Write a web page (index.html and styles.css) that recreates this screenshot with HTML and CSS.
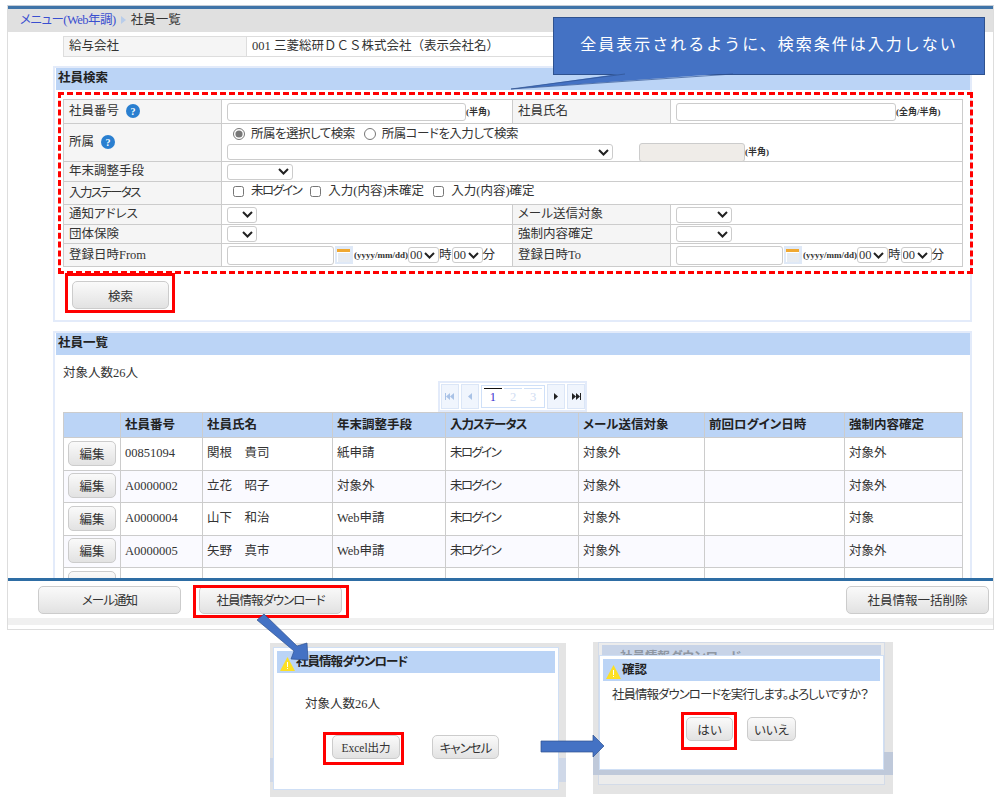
FILE: index.html
```html
<!DOCTYPE html>
<html lang="ja">

<head>
    <meta charset="UTF-8">
    <title>社員一覧</title>
    <link rel="stylesheet" href="styles.css">
</head>

<body>

    <div class="window">
        <!-- Breadcrumb -->
        <div class="crumb">
            <a href="#" class="ks-s">メニュー(Web年調)</a>
            <svg class="crumb-sep" width="5" height="8" viewBox="0 0 5 8"><path d="M0 0L5 4L0 8Z" fill="#b9cdea"/></svg>
            <span>社員一覧</span>
        </div>

        <div class="main">
            <table class="company">
                <tr>
                    <th>給与会社</th>
                    <td>001 三菱総研ＤＣＳ株式会社（表示会社名）</td>
                </tr>
            </table>

            <!-- Search panel -->
            <section class="panel search-panel">
                <h2>社員検索</h2>
                <table class="form-table">
                    <colgroup>
                        <col class="c-label"><col class="c-value"><col class="c-label"><col>
                    </colgroup>
                    <tr class="r-24">
                        <th>社員番号<svg class="help" width="14" height="14" viewBox="0 0 14 14"><circle cx="7" cy="7" r="7" fill="#2a7fd0"/><text x="7" y="11" text-anchor="middle" font-size="10" font-weight="bold" fill="#fff">?</text></svg></th>
                        <td><input type="text" class="txt-long"><span class="hint">(半角)</span></td>
                        <th>社員氏名</th>
                        <td><input type="text" class="txt-name"><span class="hint">(全角/半角)</span></td>
                    </tr>
                    <tr class="r-38">
                        <th>所属<svg class="help" width="14" height="14" viewBox="0 0 14 14"><circle cx="7" cy="7" r="7" fill="#2a7fd0"/><text x="7" y="11" text-anchor="middle" font-size="10" font-weight="bold" fill="#fff">?</text></svg></th>
                        <td colspan="3">
                            <div class="radio-row">
                                <label class="ks-s"><input type="radio" name="dept" checked>所属を選択して検索</label>
                                <label class="ks-s"><input type="radio" name="dept">所属コードを入力して検索</label>
                            </div>
                            <div class="dept-row">
                                <select class="sel-dept"><option></option></select>
                                <input type="text" class="txt-code" disabled><span class="hint">(半角)</span>
                            </div>
                        </td>
                    </tr>
                    <tr class="r-20">
                        <th>年末調整手段</th>
                        <td colspan="3"><select class="sel-mid"><option></option></select></td>
                    </tr>
                    <tr class="r-23">
                        <th class="ks-l">入力ステータス</th>
                        <td colspan="3" class="check-row">
                            <label class="ks-l"><input type="checkbox">未ログイン</label>
                            <label><input type="checkbox">入力(内容)未確定</label>
                            <label><input type="checkbox">入力(内容)確定</label>
                        </td>
                    </tr>
                    <tr class="r-20">
                        <th>通知アドレス</th>
                        <td><select class="sel-small"><option></option></select></td>
                        <th>メール送信対象</th>
                        <td><select class="sel-wide"><option></option></select></td>
                    </tr>
                    <tr class="r-19">
                        <th>団体保険</th>
                        <td><select class="sel-small"><option></option></select></td>
                        <th>強制内容確定</th>
                        <td><select class="sel-wide"><option></option></select></td>
                    </tr>
                    <tr class="r-23">
                        <th>登録日時From</th>
                        <td>
                            <div class="date-row">
                                <input type="text" class="txt-date">
                                <svg class="cal" width="18" height="18" viewBox="0 0 18 18"><rect width="18" height="18" fill="#dfe9f7"/><rect x="2" y="3" width="13" height="3" fill="#f0a830"/><rect x="2" y="6" width="13" height="10" fill="#fff"/><path d="M4 7V16M6 7V16M8 7V16M10 7V16M12 7V16M14 7V16" stroke="#cfd8e4"/></svg>
                                <span class="hint">(yyyy/mm/dd)</span>
                                <select class="sel-time"><option>00</option></select>時<select class="sel-time"><option>00</option></select>分
                            </div>
                        </td>
                        <th>登録日時To</th>
                        <td>
                            <div class="date-row">
                                <input type="text" class="txt-date">
                                <svg class="cal" width="18" height="18" viewBox="0 0 18 18"><rect width="18" height="18" fill="#dfe9f7"/><rect x="2" y="3" width="13" height="3" fill="#f0a830"/><rect x="2" y="6" width="13" height="10" fill="#fff"/><path d="M4 7V16M6 7V16M8 7V16M10 7V16M12 7V16M14 7V16" stroke="#cfd8e4"/></svg>
                                <span class="hint">(yyyy/mm/dd)</span>
                                <select class="sel-time"><option>00</option></select>時<select class="sel-time"><option>00</option></select>分
                            </div>
                        </td>
                    </tr>
                </table>
                <button class="btn btn-search">検索</button>
            </section>

            <!-- Employee list -->
            <section class="panel list-panel">
                <h2>社員一覧</h2>
                <p class="count">対象人数26人</p>
                <div class="pager-wrap">
                    <div class="pager">
                        <span class="pg-btn"><svg width="9" height="7" viewBox="0 0 9 7"><path d="M0 0H1V7H0ZM5 0V7L1 3.5ZM9 0V7L5 3.5Z" fill="#a9c2e6"/></svg></span>
                        <span class="pg-btn"><svg width="4" height="7" viewBox="0 0 4 7"><path d="M4 0V7L0 3.5Z" fill="#a9c2e6"/></svg></span>
                        <div class="pg-nums">
                            <a class="current">1</a><a>2</a><a>3</a>
                        </div>
                        <span class="pg-btn"><svg width="4" height="7" viewBox="0 0 4 7"><path d="M0 0V7L4 3.5Z" fill="#222"/></svg></span>
                        <span class="pg-btn"><svg width="9" height="7" viewBox="0 0 9 7"><path d="M0 0V7L4 3.5ZM4 0V7L8 3.5ZM8 0H9V7H8Z" fill="#222"/></svg></span>
                    </div>
                </div>
                <table class="list-table">
                    <colgroup>
                        <col style="width:57px"><col style="width:82px"><col style="width:130px"><col style="width:113px"><col style="width:133px"><col style="width:126px"><col style="width:140px"><col>
                    </colgroup>
                    <thead>
                        <tr>
                            <th></th><th>社員番号</th><th>社員氏名</th><th>年末調整手段</th><th class="ks">入力ステータス</th><th>メール送信対象</th><th>前回ログイン日時</th><th>強制内容確定</th>
                        </tr>
                    </thead>
                    <tbody>
                        <tr>
                            <td><button class="btn btn-edit">編集</button></td>
                            <td>00851094</td><td>関根　貴司</td><td>紙申請</td><td class="ks-l">未ログイン</td><td>対象外</td><td></td><td>対象外</td>
                        </tr>
                        <tr>
                            <td><button class="btn btn-edit">編集</button></td>
                            <td>A0000002</td><td>立花　昭子</td><td>対象外</td><td class="ks-l">未ログイン</td><td>対象外</td><td></td><td>対象外</td>
                        </tr>
                        <tr>
                            <td><button class="btn btn-edit">編集</button></td>
                            <td>A0000004</td><td>山下　和治</td><td>Web申請</td><td class="ks-l">未ログイン</td><td>対象外</td><td></td><td>対象</td>
                        </tr>
                        <tr>
                            <td><button class="btn btn-edit">編集</button></td>
                            <td>A0000005</td><td>矢野　真市</td><td>Web申請</td><td class="ks-l">未ログイン</td><td>対象外</td><td></td><td>対象外</td>
                        </tr>
                        <tr>
                            <td><button class="btn btn-edit"></button></td>
                            <td></td><td></td><td></td><td></td><td></td><td></td><td></td>
                        </tr>
                    </tbody>
                </table>
            </section>
        </div>

        <!-- Footer buttons -->
        <footer class="actions">
            <button class="btn btn-foot ks">メール通知</button>
            <button class="btn btn-foot ks">社員情報ダウンロード</button>
            <button class="btn btn-foot btn-right">社員情報一括削除</button>
        </footer>
    </div>

    <!-- Download dialog -->
    <div class="backdrop backdrop-a">
        <div class="band band-a"></div>
        <div class="dialog dialog-a">
            <h3 class="ks"><svg class="warn" width="15" height="14" viewBox="0 0 15 14"><path d="M7.5 0L15 14H0Z" fill="#fde025"/><path d="M7 5H8V10H7ZM7 11H8V12H7Z" fill="#fff"/></svg>社員情報ダウンロード</h3>
            <p class="dialog-count">対象人数26人</p>
            <div class="dialog-btns gap-a">
                <button class="btn btn-excel">Excel出力</button>
                <button class="btn btn-cancel ks">キャンセル</button>
            </div>
        </div>
    </div>

    <!-- Confirm dialog -->
    <div class="backdrop backdrop-b">
        <div class="ghost"><div class="ghost-head">社員情報ダウンロード</div></div>
        <div class="band band-b"></div>
        <div class="dialog dialog-b">
            <h3><svg class="warn" width="15" height="14" viewBox="0 0 15 14"><path d="M7.5 0L15 14H0Z" fill="#fde025"/><path d="M7 5H8V10H7ZM7 11H8V12H7Z" fill="#fff"/></svg>確認</h3>
            <p class="dialog-msg ks">社員情報ダウンロードを実行します。よろしいですか？</p>
            <div class="dialog-btns gap-b">
                <button class="btn btn-yes">はい</button>
                <button class="btn btn-no">いいえ</button>
            </div>
        </div>
    </div>

    <!-- Annotations drawn over the screen -->
    <div class="note-dash"></div>
    <div class="note-box box-search"></div>
    <div class="note-box box-download"></div>
    <div class="note-box box-excel"></div>
    <div class="note-box box-yes"></div>
    <div class="callout">全員表示されるように、検索条件は入力しない</div>
    <svg class="shapes" width="1005" height="797" viewBox="0 0 1005 797">
        <path d="M625 73H733L511 89Z" fill="#4472c4"/>
        <path d="M625 74L511 89L733 74" fill="none" stroke="#2f528f" stroke-width="0.7"/>
        <path d="M264 614L297 646L307 643L308 660L291 659L294 651L257 620Z" fill="#4472c4" stroke="#2f528f" stroke-width="0.7"/>
        <path d="M541 741H593V735L604 746L593 757V752H541Z" fill="#4472c4" stroke="#2f528f" stroke-width="0.7"/>
    </svg>

</body>

</html>
```

FILE: styles.css
```css
/* Basic Reset */
* {
    margin: 0;
    padding: 0;
    box-sizing: border-box;
}

body {
    position: relative;
    width: 1005px;
    height: 797px;
    overflow: hidden;
    background-color: white;
    color: #333;
    font-family: "Liberation Serif", "Noto Sans CJK JP", serif;
    font-size: 12.5px;
    line-height: 14px;
    font-feature-settings: "palt";
}

/* Tighter text where the kana run narrow */
.ks-s { letter-spacing: -0.5px; }
.ks { letter-spacing: -1px; }
.ks-l { letter-spacing: -1.6px; }

/* Main window */
.window {
    margin: 5px 0 0 7px;
    width: 987px;
    height: 625px;
    border: 1px solid #ddd;
    border-top: 1px solid #c4ccd6;
    background-color: white;
}

.crumb {
    height: 26px;
    padding: 0 0 2px 12px;
    border-top: 3px solid #3f74a8;
    background-color: #e0e0e0;
    display: flex;
    align-items: center;
    gap: 5px;
}

.crumb a {
    color: #3a4fd0;
    text-decoration: none;
}

.main {
    height: 546px;
    overflow: hidden;
    padding-top: 4px;
}

.company {
    margin-left: 55px;
    width: 900px;
    height: 21px;
    border-collapse: collapse;
    table-layout: fixed;
}

.company th,
.company td {
    border: 1px solid #ddd;
    padding: 0 5px 2px;
    text-align: left;
    font-weight: normal;
    font-feature-settings: normal;
}

.company th {
    width: 183px;
    background-color: #f5f5f5;
}

/* Panels */
.panel {
    margin-left: 45px;
    width: 919px;
    border: 2px solid #e3ebfa;
    border-top-width: 2px;
}

.panel h2 {
    height: 22px;
    margin-left: 1px;
    padding-left: 2px;
    line-height: 21px;
    background-color: #bbd4f6;
    font-size: 12.5px;
    color: #222;
}

.search-panel {
    margin-top: 9px;
    height: 256px;
}

.list-panel {
    margin-top: 9px;
    height: 300px;
}

/* Search form */
.form-table {
    margin: 9px 0 0 8px;
    width: 900px;
    border-collapse: collapse;
    table-layout: fixed;
    background-color: white;
}

.c-label {
    width: 158px;
}

.c-value {
    width: 291px;
}

.form-table th,
.form-table td {
    border: 1px solid #ccc;
    padding: 0 5px;
    text-align: left;
    font-weight: normal;
    white-space: nowrap;
}

.form-table th {
    background-color: #f5f5f5;
    padding-bottom: 1px;
}

.r-24 { height: 24px; }
.r-38 { height: 38px; }
.r-20 { height: 20px; }
.r-23 { height: 23px; }
.r-19 { height: 19px; }

.help {
    margin-left: 7px;
    vertical-align: -3px;
}

input[type="text"],
select {
    border: 1px solid #ccc;
    border-radius: 3px;
    background-color: white;
    font-family: inherit;
    font-size: 12.5px;
    color: #333;
    vertical-align: middle;
}

select {
    appearance: none;
    padding-left: 1px;
    background-image: url("data:image/svg+xml,%3Csvg xmlns='http://www.w3.org/2000/svg' width='11' height='7'%3E%3Cpath d='M1 1L5.5 5.5L10 1' fill='none' stroke='%23222' stroke-width='2'/%3E%3C/svg%3E");
    background-repeat: no-repeat;
    background-position: right 3px center;
}

.txt-long { width: 239px; height: 18px; }
.txt-name { width: 220px; height: 18px; }
.txt-code { width: 106px; height: 19px; margin-left: 26px; background-color: #efece8 !important; }
.txt-date { width: 107px; height: 19px; }

.sel-dept { width: 386px; height: 16px; }
.sel-mid { width: 66px; height: 16px; display: block; }
.sel-small { width: 30px; height: 16px; display: block; }
.sel-wide { width: 56px; height: 16px; display: block; }
.sel-time { width: 31px; height: 16px; }

.hint {
    font-size: 9px;
    font-weight: bold;
    white-space: nowrap;
}

.radio-row {
    display: flex;
    gap: 9px;
    padding-left: 6px;
    height: 19px;
    align-items: center;
}

.radio-row label,
.check-row label {
    display: inline-flex;
    align-items: center;
}

input[type="radio"] {
    width: 12px;
    height: 12px;
    margin-right: 6px;
    accent-color: #777;
}

input[type="checkbox"] {
    width: 11px;
    height: 11px;
    margin-right: 7px;
}

.dept-row {
    display: flex;
    align-items: center;
    height: 18px;
}

.check-row {
    padding-bottom: 2px !important;
}

.check-row label {
    margin: 0 0 0 6px;
}

.date-row {
    display: flex;
    align-items: center;
    white-space: nowrap;
}

.cal {
    margin: 0 1px;
    flex: none;
}

/* Buttons */
.btn {
    border: 1px solid #ccc;
    border-radius: 5px;
    background: linear-gradient(#fafafa, #e2e2e2);
    color: #333;
    font-family: inherit;
    font-size: 12.5px;
    font-feature-settings: "palt";
}

.btn-search {
    display: block;
    width: 97px;
    height: 28px;
    margin: 14px 0 0 17px;
}

.btn-edit {
    display: block;
    width: 48px;
    height: 25px;
    margin: 0 auto;
}

.btn-foot {
    width: 143px;
    height: 28px;
}

.btn-right {
    margin-left: auto;
}

/* Employee list */
.count {
    margin: 11px 0 0 8px;
    line-height: 15px;
}

.pager-wrap {
    display: flex;
    justify-content: flex-end;
    padding-right: 383px;
    height: 31px;
}

.pager {
    width: 149px;
    height: 31px;
    border: 2px solid #e3ebfa;
    display: flex;
    align-items: center;
    gap: 2px;
    padding-left: 1px;
    background-color: white;
}

.pg-btn {
    width: 18px;
    height: 25px;
    background-color: #f0f5fd;
    border: 1px solid #dbe6f7;
    display: flex;
    align-items: center;
    justify-content: center;
}

.pg-nums {
    width: 65px;
    height: 23px;
    border: 1px solid #cfe0f8;
    display: flex;
    gap: 2px;
    padding: 2px 2px 0;
}

.pg-nums a {
    flex: 1;
    text-align: center;
    line-height: 16px;
    color: #cfdcf2;
    border-top: 1px solid #cfe0f8;
}

.pg-nums a.current {
    color: #3a2fd0;
    border-top: 1px solid #111;
}

.list-table {
    margin-left: 8px;
    width: 900px;
    border-collapse: collapse;
    table-layout: fixed;
}

.list-table th,
.list-table td {
    border: 1px solid #ccc;
    padding: 0 4px 1px;
    text-align: left;
}

.list-table th {
    height: 25px;
    background-color: #bbd4f6;
    color: #222;
}

.list-table td {
    height: 32.5px;
}

.list-table tbody tr:nth-child(even) {
    background-color: #fafaff;
}

/* Footer buttons */
.actions {
    height: 47px;
    border-top: 3px solid #2e6da4;
    border-bottom: 7px solid #f0f0f0;
    display: flex;
    align-items: center;
    gap: 18px;
    padding: 0 4px 0 30px;
}

/* Dialogs */
.backdrop {
    position: absolute;
    background-color: #e4e4e4;
}

.backdrop-a {
    left: 270px;
    top: 643px;
    width: 296px;
    height: 154px;
}

.backdrop-b {
    left: 593px;
    top: 642px;
    width: 300px;
    height: 152px;
}

.band {
    position: absolute;
    left: 0;
    width: 100%;
}

.band-a {
    top: 115px;
    height: 24px;
    background-color: #cfd8e8;
}

.band-b {
    top: 110px;
    height: 23px;
    background-color: #bfc9da;
}

.dialog {
    position: absolute;
    background-color: white;
    border: 1px solid #cfdff5;
    padding: 3px;
}

.dialog-a {
    left: 3px;
    top: 4px;
    width: 286px;
    height: 143px;
}

.dialog-b {
    left: 6px;
    top: 13px;
    width: 285px;
    height: 115px;
}

.dialog h3 {
    height: 22px;
    background-color: #bbd4f6;
    display: flex;
    align-items: center;
    font-size: 12.5px;
    color: #222;
    padding-left: 3px;
}

.warn {
    margin: 4px 1px 0 0;
    flex: none;
}

.dialog-count {
    margin: 22px 0 0 28px;
    line-height: 18px;
}

.dialog-msg {
    margin: 5px 0 0 9px;
    line-height: 18px;
    white-space: nowrap;
}

.dialog-btns {
    display: flex;
}

.gap-a {
    margin: 22px 0 0 55px;
    gap: 32px;
}

.gap-b {
    margin: 13px 0 0 83px;
    gap: 14px;
}

.btn-excel { width: 68px; height: 24px; font-size: 11.5px; }
.btn-cancel { width: 67px; height: 24px; }
.btn-yes { width: 47px; height: 24px; }
.btn-no { width: 49px; height: 24px; }

.ghost {
    position: absolute;
    left: 5px;
    top: 0;
    width: 287px;
    height: 143px;
    background-color: #ececec;
    border: 1px solid #d3dbe8;
}

.ghost-head {
    height: 12px;
    margin: 2px 3px 0;
    padding: 5px 0 0 18px;
    background-color: #c8d4e8;
    color: #8f97a3;
    font-weight: bold;
}

/* Annotations */
.note-dash {
    position: absolute;
    left: 58px;
    top: 92px;
    width: 915px;
    height: 182px;
    border: 3px dashed #f00;
}

.note-box {
    position: absolute;
    border: 3px solid #f00;
}

.box-search { left: 65px; top: 273px; width: 110px; height: 40px; }
.box-download { left: 193px; top: 585px; width: 156px; height: 33px; }
.box-excel { left: 323px; top: 732px; width: 81px; height: 33px; }
.box-yes { left: 681px; top: 712px; width: 56px; height: 38px; }

.callout {
    position: absolute;
    left: 553px;
    top: 17px;
    width: 432px;
    height: 58px;
    border: 1px solid #2f528f;
    background-color: #4472c4;
    color: white;
    font-family: "Noto Sans CJK JP", sans-serif;
    font-size: 16px;
    letter-spacing: 2px;
    font-feature-settings: normal;
    text-align: center;
    line-height: 50px;
}

.shapes {
    position: absolute;
    left: 0;
    top: 0;
    pointer-events: none;
}
```
